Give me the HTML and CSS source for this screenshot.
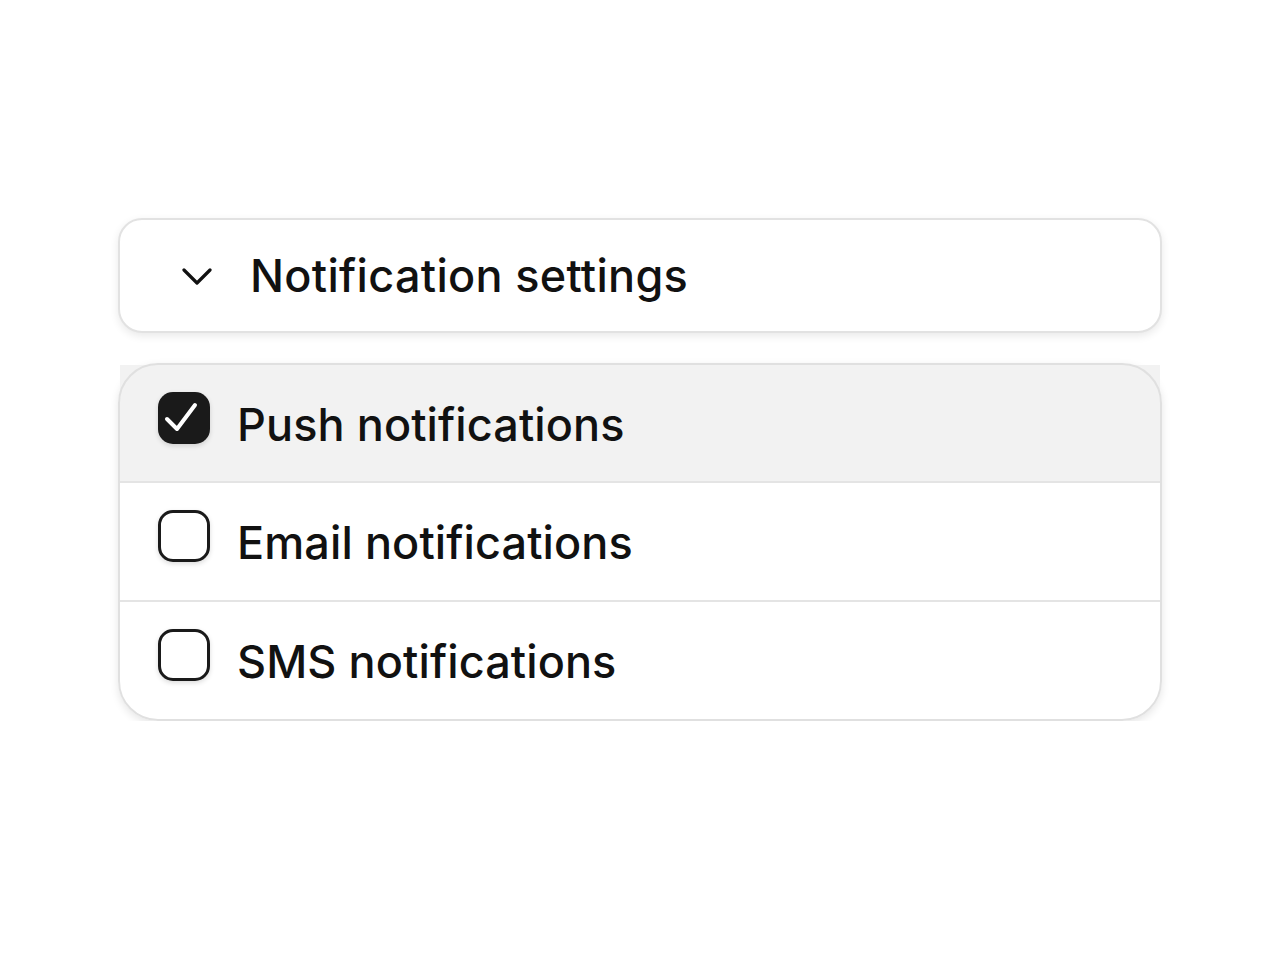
FILE: index.html
```html
<!DOCTYPE html>
<html lang="en">
<head>
<meta charset="utf-8">
<title>Notification settings</title>
<link rel="stylesheet" href="styles.css">
</head>
<body>
<main class="panel">
  <button class="header-card" type="button">
    <svg class="chevron" width="30" height="18" viewBox="0 0 30 18" aria-hidden="true">
      <path d="M2 2 L15 15 L28 2" fill="none" stroke="#111" stroke-width="3.2" stroke-linecap="round" stroke-linejoin="round"/>
    </svg>
    <span class="header-title">Notification settings</span>
  </button>

  <ul class="list-card">
    <li class="row row-active">
      <span class="box box-checked">
        <svg width="52" height="52" viewBox="0 0 52 52" aria-hidden="true">
          <path d="M9 27 L19 37 L37 13" fill="none" stroke="#fff" stroke-width="4" stroke-linecap="round" stroke-linejoin="round"/>
        </svg>
      </span>
      <span class="label">Push notifications</span>
    </li>
    <li class="row">
      <span class="box"></span>
      <span class="label">Email notifications</span>
    </li>
    <li class="row">
      <span class="box"></span>
      <span class="label">SMS notifications</span>
    </li>
  </ul>
</main>
</body>
</html>
```

FILE: styles.css
```css
* { box-sizing: border-box; }

html, body {
  margin: 0;
  padding: 0;
  background: #ffffff;
}

body {
  font-family: "Inter", "Noto Sans", "DejaVu Sans", sans-serif;
  color: #111111;
}

.panel {
  width: 1044px;
  margin: 218px auto 0;
  display: flex;
  flex-direction: column;
  gap: 30px;
}

.header-card {
  display: flex;
  align-items: center;
  gap: 38px;
  height: 115px;
  padding: 0 0 0 62px;
  border: 2px solid #e2e2e2;
  border-radius: 24px;
  background: #ffffff;
  box-shadow: 0 3px 8px rgba(0, 0, 0, 0.09);
  font: inherit;
  color: inherit;
  text-align: left;
  cursor: pointer;
}

.chevron {
  flex: none;
  margin-top: 2px;
}

.header-title {
  font-size: 45px;
  font-weight: 500;
  letter-spacing: 0.3px;
  line-height: 1;
}

.list-card {
  position: relative;
  list-style: none;
  margin: 0;
  padding: 2px;
  border-radius: 40px;
  background: #ffffff;
  box-shadow: 0 3px 8px rgba(0, 0, 0, 0.1);
}

.list-card::after {
  content: "";
  position: absolute;
  inset: 0;
  border: 2px solid #e0e0e0;
  border-radius: 40px;
  pointer-events: none;
}

.row {
  display: flex;
  align-items: flex-start;
  gap: 27px;
  height: 116px;
  padding: 27px 38px 0;
}

.row + .row {
  border-top: 2px solid #e4e4e4;
  height: 119px;
}

.row-active {
  background: #f2f2f2;
}

.box {
  flex: none;
  width: 52px;
  height: 52px;
  border: 3px solid #1a1a1a;
  border-radius: 15px;
  background: #ffffff;
  box-shadow: 0 2px 5px rgba(0, 0, 0, 0.14);
  display: flex;
}

.box-checked {
  border: none;
  background: #1a1a1a;
}

.label {
  font-size: 45px;
  font-weight: 500;
  line-height: 66px;
  letter-spacing: 0.1px;
}
```
